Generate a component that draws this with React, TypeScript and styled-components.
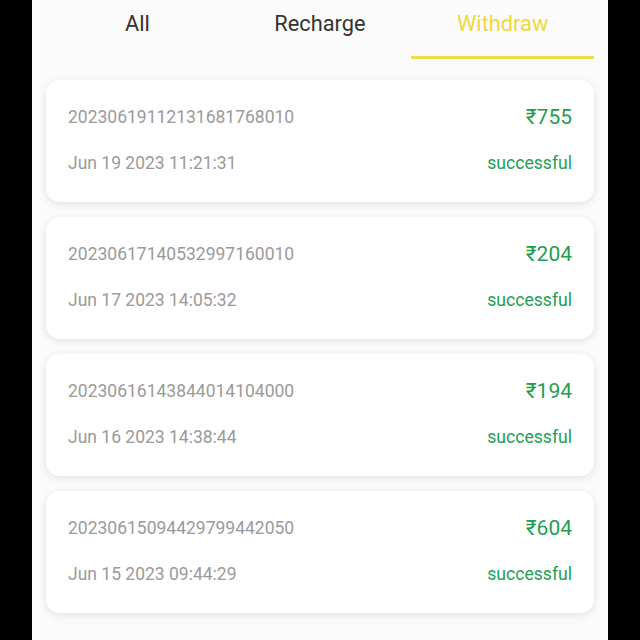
import React, { useState } from "react";
import styled, { createGlobalStyle } from "styled-components";

const Global = createGlobalStyle`
  html, body { margin: 0; padding: 0; background: #000; }
  body { font-family: Roboto, "Noto Sans", "Liberation Sans", sans-serif; }
`;

const Screen = styled.div`
  width: 576px;
  margin-left: 32px;
  min-height: 640px;
  background: #fbfbfb;
  padding: 0 14px;
  box-sizing: border-box;
`;

const Tabs = styled.div`
  display: grid;
  grid-template-columns: repeat(3, 1fr);
  height: 59px;
`;

const Tab = styled.div<{ $active?: boolean }>`
  display: flex;
  align-items: flex-start;
  justify-content: center;
  padding-top: 10px;
  box-sizing: border-box;
  font-size: 21.8px;
  line-height: 28px;
  color: ${(p) => (p.$active ? "#f0d83c" : "#333333")};
  border-bottom: 3px solid ${(p) => (p.$active ? "#f0dc4a" : "transparent")};
  cursor: pointer;
`;

const List = styled.div`
  display: flex;
  flex-direction: column;
  gap: 15px;
  padding-top: 21px;
`;

const Card = styled.div`
  background: #fff;
  border-radius: 14px;
  box-shadow: 0 2px 8px rgba(0, 0, 0, 0.11);
  padding: 26px 22px 28px;
  display: flex;
  flex-direction: column;
  gap: 24px;
`;

const Row = styled.div`
  display: flex;
  justify-content: space-between;
  align-items: center;
  height: 22px;
`;

const Muted = styled.span`
  font-size: 17.5px;
  color: #9a9a9a;
  line-height: 22px;
`;

const Amount = styled.span`
  font-size: 21px;
  color: #1f9d50;
  line-height: 22px;
`;

const Status = styled.span`
  font-size: 17.6px;
  color: #22a052;
  line-height: 22px;
`;

const records = [
  { id: "20230619112131681768010", amount: "₹755", date: "Jun 19 2023 11:21:31" },
  { id: "20230617140532997160010", amount: "₹204", date: "Jun 17 2023 14:05:32" },
  { id: "20230616143844014104000", amount: "₹194", date: "Jun 16 2023 14:38:44" },
  { id: "20230615094429799442050", amount: "₹604", date: "Jun 15 2023 09:44:29" },
];

export default function App() {
  const [tab, setTab] = useState("Withdraw");
  return (
    <>
      <Global />
      <Screen>
        <Tabs>
          {["All", "Recharge", "Withdraw"].map((t) => (
            <Tab key={t} $active={tab === t} onClick={() => setTab(t)}>
              {t}
            </Tab>
          ))}
        </Tabs>
        <List>
          {records.map((r) => (
            <Card key={r.id}>
              <Row>
                <Muted>{r.id}</Muted>
                <Amount>{r.amount}</Amount>
              </Row>
              <Row>
                <Muted>{r.date}</Muted>
                <Status>successful</Status>
              </Row>
            </Card>
          ))}
        </List>
      </Screen>
    </>
  );
}
